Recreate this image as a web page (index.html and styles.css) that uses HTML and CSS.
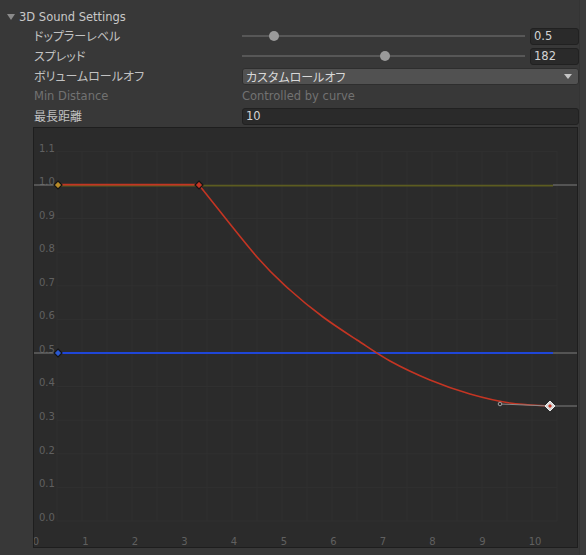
FILE: index.html
```html
<!DOCTYPE html>
<html lang="ja">
<head>
    <meta charset="UTF-8">
    <title>3D Sound Settings</title>
    <link rel="stylesheet" href="styles.css">
</head>
<body>
    <div class="inspector">
        <div class="foldout"><span class="foldout-arrow"></span>3D Sound Settings</div>

        <div class="row">
            <span class="label ja">ドップラーレベル</span>
            <div class="slider-field">
                <div class="slider">
                    <div class="track"></div>
                    <div class="thumb" style="left: 11.3%"></div>
                </div>
                <div class="num">0.5</div>
            </div>
        </div>

        <div class="row">
            <span class="label ja">スプレッド</span>
            <div class="slider-field">
                <div class="slider">
                    <div class="track"></div>
                    <div class="thumb" style="left: 50.7%"></div>
                </div>
                <div class="num">182</div>
            </div>
        </div>

        <div class="row">
            <span class="label ja">ボリュームロールオフ</span>
            <div class="popup">
                <span class="ja">カスタムロールオフ</span>
                <span class="popup-arrow"></span>
            </div>
        </div>

        <div class="row disabled">
            <span class="label">Min Distance</span>
            <span>Controlled by curve</span>
        </div>

        <div class="row">
            <span class="label ja">最長距離</span>
            <div class="num wide">10</div>
        </div>

        <div class="curve-box">
            <svg width="543" height="419" viewBox="34 128 543 419">
                <!-- grid -->
                <g class="grid">
                    <line x1="57" y1="151" x2="57" y2="521"/>
                    <line x1="82" y1="151" x2="82" y2="521"/>
                    <line x1="107" y1="151" x2="107" y2="521"/>
                    <line x1="132" y1="151" x2="132" y2="521"/>
                    <line x1="157" y1="151" x2="157" y2="521"/>
                    <line x1="182" y1="151" x2="182" y2="521"/>
                    <line x1="207" y1="151" x2="207" y2="521"/>
                    <line x1="232" y1="151" x2="232" y2="521"/>
                    <line x1="257" y1="151" x2="257" y2="521"/>
                    <line x1="282" y1="151" x2="282" y2="521"/>
                    <line x1="307" y1="151" x2="307" y2="521"/>
                    <line x1="332" y1="151" x2="332" y2="521"/>
                    <line x1="357" y1="151" x2="357" y2="521"/>
                    <line x1="382" y1="151" x2="382" y2="521"/>
                    <line x1="407" y1="151" x2="407" y2="521"/>
                    <line x1="432" y1="151" x2="432" y2="521"/>
                    <line x1="457" y1="151" x2="457" y2="521"/>
                    <line x1="482" y1="151" x2="482" y2="521"/>
                    <line x1="507" y1="151" x2="507" y2="521"/>
                    <line x1="532" y1="151" x2="532" y2="521"/>
                    <line x1="557" y1="151" x2="557" y2="521"/>
                    <line x1="57" y1="151.4" x2="557" y2="151.4"/>
                    <line x1="57" y1="185" x2="557" y2="185"/>
                    <line x1="57" y1="218.6" x2="557" y2="218.6"/>
                    <line x1="57" y1="252.2" x2="557" y2="252.2"/>
                    <line x1="57" y1="285.8" x2="557" y2="285.8"/>
                    <line x1="57" y1="319.4" x2="557" y2="319.4"/>
                    <line x1="57" y1="353" x2="557" y2="353"/>
                    <line x1="57" y1="386.6" x2="557" y2="386.6"/>
                    <line x1="57" y1="420.2" x2="557" y2="420.2"/>
                    <line x1="57" y1="453.8" x2="557" y2="453.8"/>
                    <line x1="57" y1="487.4" x2="557" y2="487.4"/>
                    <line x1="57" y1="521" x2="557" y2="521"/>
                </g>

                <!-- axis labels -->
                <g class="axis-y">
                    <text x="39" y="151.5">1.1</text>
                    <text x="39" y="185">1.0</text>
                    <text x="39" y="218.5">0.9</text>
                    <text x="39" y="252">0.8</text>
                    <text x="39" y="285.6">0.7</text>
                    <text x="39" y="319.2">0.6</text>
                    <text x="39" y="352.8">0.5</text>
                    <text x="39" y="386.4">0.4</text>
                    <text x="39" y="420">0.3</text>
                    <text x="39" y="453.6">0.2</text>
                    <text x="39" y="487.2">0.1</text>
                    <text x="39" y="521">0.0</text>
                </g>
                <g class="axis-x">
                    <text x="36" y="545">0</text>
                    <text x="85.5" y="545">1</text>
                    <text x="135" y="545">2</text>
                    <text x="184.5" y="545">3</text>
                    <text x="234" y="545">4</text>
                    <text x="284" y="545">5</text>
                    <text x="333.5" y="545">6</text>
                    <text x="383" y="545">7</text>
                    <text x="432.5" y="545">8</text>
                    <text x="482.5" y="545">9</text>
                    <text x="535" y="545">10</text>
                </g>

                <!-- curve wrap lines -->
                <g class="wrap">
                    <line x1="34" y1="185" x2="58" y2="185"/>
                    <line x1="553" y1="185" x2="577" y2="185"/>
                    <line x1="34" y1="353" x2="58" y2="353"/>
                    <line x1="553" y1="353" x2="577" y2="353"/>
                    <line x1="550" y1="406" x2="577" y2="406"/>
                </g>

                <!-- spread / spatial / volume -->
                <line class="spread" x1="58" y1="185.6" x2="553" y2="185.6"/>
                <line class="blend" x1="58" y1="353" x2="553" y2="353"/>
                <line class="volume" x1="58" y1="184.6" x2="199" y2="184.6"/>
                <path class="volume" d="M199,185 C218.3,209 241.8,239.5 257,257 C272.2,274.5 279,280 290,290 C301,300 311.8,308.7 323,317 C334.2,325.3 345.8,332.7 357,340 C368.2,347.3 377.8,354.3 390,361 C402.2,367.7 416.7,374.5 430,380 C443.3,385.5 456.7,390.2 470,394 C483.3,397.8 496.7,401 510,403 C523.3,405 536.7,405.2 550,406"/>

                <!-- tangent handle -->
                <line class="tangent" x1="500" y1="404" x2="550" y2="406"/>
                <circle class="tangent-dot" cx="500" cy="404" r="1.8"/>

                <!-- keys -->
                <polygon class="key key-spread" points="58,181 62,185 58,189 54,185"/>
                <polygon class="key key-volume" points="199,181 203,185 199,189 195,185"/>
                <polygon class="key key-blend" points="58,349 62,353 58,357 54,353"/>
                <polygon class="key-selected" points="550,401 555,406 550,411 545,406"/>
                <polygon class="key-volume" points="550,404 552,406 550,408 548,406"/>
            </svg>
        </div>
    </div>
    <div class="scrollbar"></div>
</body>
</html>
```

FILE: styles.css
```css
body {
    margin: 0;
    height: 555px;
    overflow: hidden;
    display: flex;
    background-color: #383838;
    font-family: "DejaVu Sans", "Noto Sans CJK JP", sans-serif;
    font-size: 11.5px;
    color: #c2c2c2;
}
.inspector {
    flex: 1;
    padding-top: 7px;
}
.scrollbar {
    width: 6px;
    background-color: #3c3c3c;
    border-left: 1px solid #343434;
}
.ja {
    font-family: "Noto Sans CJK JP", sans-serif;
    font-size: 12px;
    font-feature-settings: "palt";
}
.foldout {
    height: 19px;
    display: flex;
    align-items: center;
    gap: 4px;
    padding-left: 7px;
    color: #c8c8c8;
}
.foldout-arrow {
    width: 0;
    height: 0;
    border-left: 4px solid transparent;
    border-right: 4px solid transparent;
    border-top: 6px solid #8a8a8a;
}
.row {
    height: 20px;
    display: grid;
    grid-template-columns: 208px 1fr;
    align-items: center;
    padding-left: 34px;
    line-height: 20px;
}
.row.disabled {
    color: #727272;
}
.slider-field {
    display: flex;
    align-items: center;
    gap: 5px;
}
.slider {
    position: relative;
    flex: 1;
    height: 17px;
    display: flex;
    align-items: center;
}
.track {
    flex: 1;
    height: 2px;
    background-color: #575757;
}
.thumb {
    position: absolute;
    top: 3px;
    width: 10px;
    height: 10px;
    margin-left: -5px;
    border-radius: 50%;
    background-color: #9a9a9a;
}
.num {
    width: 49px;
    height: 17px;
    box-sizing: border-box;
    padding-left: 3px;
    background-color: #2a2a2a;
    border: 1px solid #212121;
    border-radius: 3px;
    color: #d4d4d4;
    line-height: 15px;
}
.num.wide {
    width: auto;
}
.popup {
    height: 17px;
    box-sizing: border-box;
    display: flex;
    align-items: center;
    justify-content: space-between;
    padding: 0 6px 0 3px;
    background-color: #515151;
    border: 1px solid #2e2e2e;
    border-radius: 3px;
    color: #d8d8d8;
    line-height: 15px;
}
.popup-arrow {
    width: 0;
    height: 0;
    border-left: 4px solid transparent;
    border-right: 4px solid transparent;
    border-top: 5px solid #c4c4c4;
}
.curve-box {
    margin: 1px 0 0 33px;
    width: 545px;
    height: 421px;
    box-sizing: border-box;
    border: 1px solid #1e1e1e;
    background-color: #2b2b2b;
}
.curve-box svg {
    display: block;
}
.grid line {
    stroke: #313131;
    stroke-width: 1;
}
.axis-y text,
.axis-x text {
    font-family: "DejaVu Sans", sans-serif;
    font-size: 10px;
    fill: #606060;
}
.axis-x text {
    text-anchor: middle;
}
.wrap line {
    stroke: #707070;
    stroke-width: 1.2;
}
.spread {
    stroke: #5c5c20;
    stroke-width: 1.6;
}
.blend {
    stroke: #1f46d8;
    stroke-width: 2;
}
.volume {
    fill: none;
    stroke: #c43523;
    stroke-width: 1.6;
}
.tangent {
    stroke: #8a8a8a;
    stroke-width: 1;
}
.tangent-dot {
    fill: #2b2b2b;
    stroke: #a0a0a0;
    stroke-width: 1;
}
.key {
    stroke: #151515;
    stroke-width: 1.2;
}
.key-spread {
    fill: #b88a28;
}
.key-volume {
    fill: #c43523;
}
.key-blend {
    fill: #2a58d0;
}
.key-selected {
    fill: #d6d6d6;
    stroke: #eeeeee;
    stroke-width: 1;
}
```
